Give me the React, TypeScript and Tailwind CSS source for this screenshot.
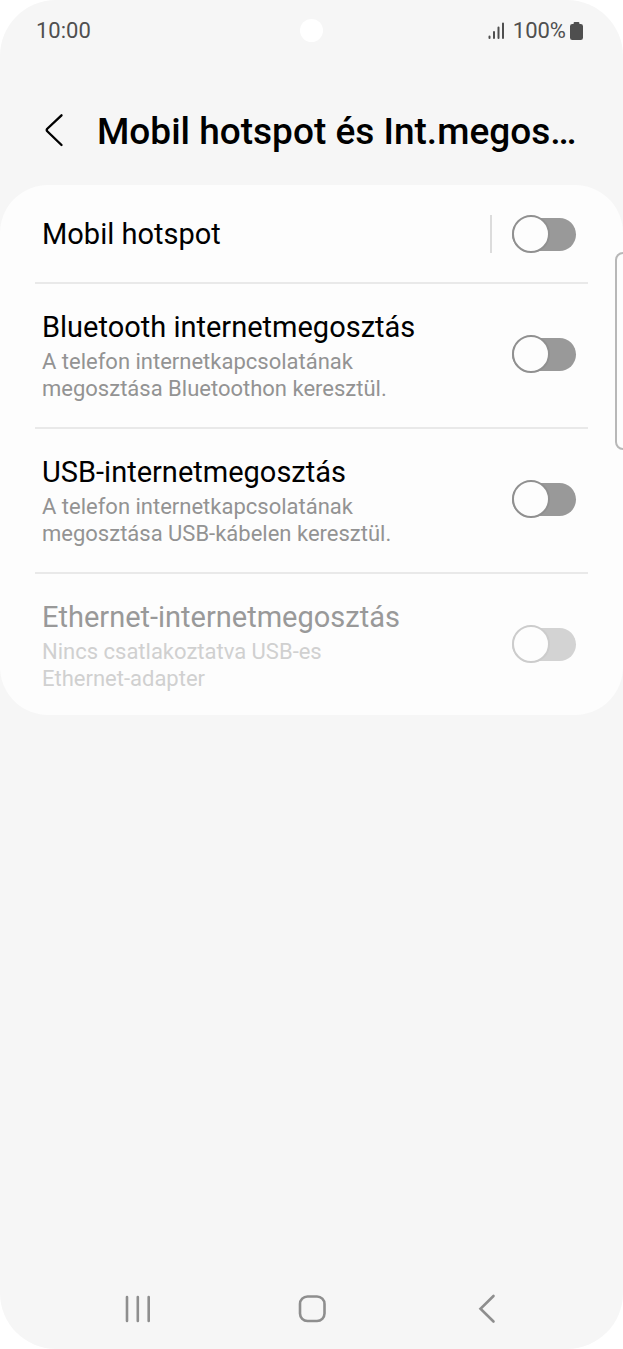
import React, { useState } from 'react';

type Setting = {
  id: string;
  title: string;
  lines?: string[];
  disabled?: boolean;
  separated?: boolean;
};

const settings: Setting[] = [
  { id: 'hotspot', title: 'Mobil hotspot', separated: true },
  {
    id: 'bluetooth',
    title: 'Bluetooth internetmegosztás',
    lines: ['A telefon internetkapcsolatának', 'megosztása Bluetoothon keresztül.'],
  },
  {
    id: 'usb',
    title: 'USB-internetmegosztás',
    lines: ['A telefon internetkapcsolatának', 'megosztása USB-kábelen keresztül.'],
  },
  {
    id: 'ethernet',
    title: 'Ethernet-internetmegosztás',
    lines: ['Nincs csatlakoztatva USB-es', 'Ethernet-adapter'],
    disabled: true,
  },
];

function StatusBar() {
  return (
    <div className="grid h-[60px] grid-cols-[1fr_auto_1fr] items-center px-9 text-[22px] leading-7 text-[#4f4f4f]">
      <time className="pt-0.5">10:00</time>
      <span className="size-[23px] rounded-full bg-white" />
      <div className="flex items-center justify-end pt-0.5 pr-1">
        <svg className="mr-2 h-[18px] w-[17px]" viewBox="0 0 17 18" stroke="currentColor" strokeWidth="2" strokeLinecap="round" aria-hidden="true">
          <path d="M1.500 14.500V16M6 10V16M10.500 5.500V16M15 1.500V16" />
        </svg>
        <span>100%</span>
        <svg className="ml-1 h-[18px] w-[13px]" viewBox="0 0 13 18" fill="currentColor" aria-hidden="true">
          <path d="M4.600 0h3.800q1 0 1 1v1h1.300Q13 2 13 4.200V15.700Q13 18 10.700 18H2.300Q0 18 0 15.700V4.200Q0 2 2.300 2h1.300V1q0-1 1-1Z" />
        </svg>
      </div>
    </div>
  );
}

function Header() {
  return (
    <header className="flex h-[125px] items-center gap-7 pt-4 pr-10 pl-10">
      <button type="button" aria-label="Vissza" className="flex h-10 w-7 shrink-0 items-center justify-center">
        <svg className="h-9 w-6" viewBox="0 0 24 36" fill="none" stroke="black" strokeWidth="2.400" strokeLinecap="round" strokeLinejoin="round" aria-hidden="true">
          <path d="M19.500 2.300L5 16L4.700 17L5 18L19.500 32" />
        </svg>
      </button>
      <h1 className="truncate pt-0.5 pl-px text-[37px] leading-[44px] font-medium">Mobil hotspot és Int.megos…</h1>
    </header>
  );
}

function Row({ setting }: { setting: Setting }) {
  const [on, setOn] = useState(false);
  const { id, title, lines, disabled, separated } = setting;
  return (
    <li className="group border-b-2 border-[#e9e9e9] last:border-b-0">
      <div
        className={
          lines
            ? 'flex items-center pt-[22px] pr-3 pb-[25px] pl-[7px] group-last:pb-[23px]'
            : 'flex items-center pt-7 pr-3 pb-[27px] pl-[7px]'
        }
      >
        <label htmlFor={id} className={disabled ? 'flex-1 text-[#999999]' : 'flex-1 text-black'}>
          <span className="block text-[29px] leading-[42px]">{title}</span>
          {lines && (
            <span className={disabled ? 'block text-[22px] leading-[27px] text-[#d0d0d0]' : 'block text-[22px] leading-[27px] text-[#939393]'}>
              {lines.map((line) => (
                <span key={line} className="block">{line}</span>
              ))}
            </span>
          )}
        </label>
        {separated && <span className="mr-5 h-[38px] w-0.5 bg-[#dcdcdc]" />}
        <input
          id={id}
          type="checkbox"
          role="switch"
          checked={on}
          disabled={disabled}
          onChange={() => setOn(!on)}
          className="relative h-[38px] w-16 shrink-0 appearance-none text-[#999999] before:absolute before:inset-x-0 before:top-[3px] before:h-[33px] before:rounded-full before:bg-current after:absolute after:top-0 after:left-0 after:size-[38px] after:rounded-full after:border-2 after:border-[#909090] after:bg-[#fdfdfd] checked:text-[#3e82f7] checked:after:right-0 checked:after:left-auto disabled:text-[#d3d3d3] disabled:after:border-[#cccccc]"
        />
      </div>
    </li>
  );
}

function NavBar() {
  return (
    <nav className="grid h-20 grid-cols-[1fr_auto_1fr] items-center px-[121px] text-[#8e8e8e]">
      <button type="button" aria-label="Legutóbbiak" className="flex size-8 items-center justify-center">
        <svg className="size-8" viewBox="0 0 32 32" stroke="currentColor" strokeWidth="2.600" strokeLinecap="round" aria-hidden="true">
          <path d="M6 4V28M16.800 4V28M27.700 4V28" />
        </svg>
      </button>
      <button type="button" aria-label="Kezdőképernyő" className="flex size-8 items-center justify-center">
        <svg className="size-8" viewBox="0 0 32 32" fill="none" stroke="currentColor" strokeWidth="2.600" aria-hidden="true">
          <rect x="4" y="3.500" width="24.500" height="24.500" rx="7.500" />
        </svg>
      </button>
      <button type="button" aria-label="Vissza" className="flex size-8 items-center justify-center justify-self-end">
        <svg className="size-8" viewBox="0 0 32 32" fill="none" stroke="currentColor" strokeWidth="2.600" strokeLinecap="round" aria-hidden="true">
          <path d="M23.500 3L10.500 15.700L23.500 28.500" />
        </svg>
      </button>
    </nav>
  );
}

export default function App() {
  return (
    <div className="min-h-screen bg-white font-[Roboto,sans-serif] text-black">
      <div className="relative flex min-h-screen flex-col overflow-hidden rounded-[56px] bg-[#f6f6f6]">
        <StatusBar />
        <Header />
        <main className="flex-1">
          <ul className="rounded-[48px] bg-[#fdfdfd] px-[35px]">
            {settings.map((setting) => (
              <Row key={setting.id} setting={setting} />
            ))}
          </ul>
        </main>
        <NavBar />
        <div className="absolute top-[252px] -right-2 h-[198px] w-4 rounded-lg border-2 border-[#b8b8b8] bg-[#fdfdfd]" />
      </div>
    </div>
  );
}
